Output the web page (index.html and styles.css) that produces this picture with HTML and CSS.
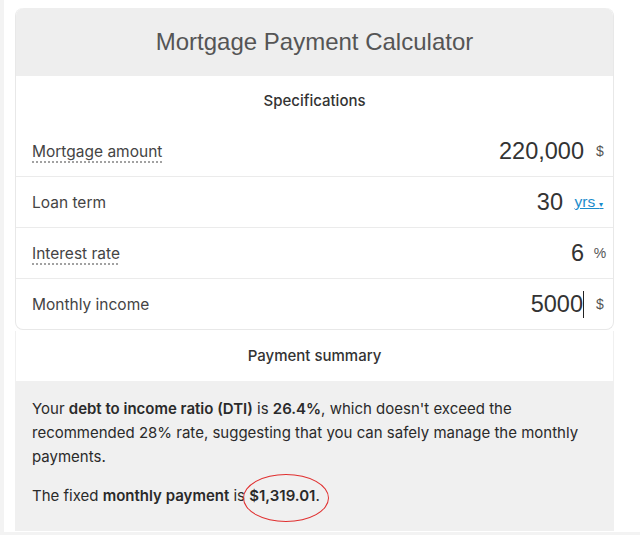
FILE: index.html
```html
<!DOCTYPE html>
<html lang="en">
<head>
    <meta charset="UTF-8">
    <meta name="viewport" content="width=device-width, initial-scale=1.0">
    <title>Mortgage Payment Calculator</title>
    <link rel="stylesheet" href="styles.css">
</head>
<body>
    <div class="page">
        <!-- Specifications card -->
        <div class="card">
            <h1 class="card-title">Mortgage Payment Calculator</h1>
            <div class="card-body">
                <div class="section-title">Specifications</div>
                <div class="row">
                    <span class="label hint">Mortgage amount</span>
                    <span class="value">220,000</span>
                    <span class="unit">$</span>
                </div>
                <div class="row">
                    <span class="label">Loan term</span>
                    <span class="value">30</span>
                    <a class="unit unit-link" href="#">yrs <small>&#9662;</small></a>
                </div>
                <div class="row">
                    <span class="label hint">Interest rate</span>
                    <span class="value">6</span>
                    <span class="unit">%</span>
                </div>
                <div class="row">
                    <span class="label">Monthly income</span>
                    <span class="value caret">5000</span>
                    <span class="unit">$</span>
                </div>
            </div>
        </div>

        <!-- Payment summary -->
        <div class="summary">
            <div class="section-title">Payment summary</div>
            <div class="summary-body">
                <p>Your <b>debt to income ratio (DTI)</b> is <b>26.4%</b>, which doesn't exceed the recommended 28% rate, suggesting that you can safely manage the monthly payments.</p>
                <p>The fixed <b>monthly payment</b> is <b class="circled">$1,319.01</b>.</p>
            </div>
        </div>
    </div>
</body>
</html>
```

FILE: styles.css
```css
html, body {
    margin: 0;
    height: 100%;
}
body {
    font-family: Inter, "Noto Sans", sans-serif;
    background-color: #fff;
    color: #333;
    border-left: 4px solid #f3f3f3;
    border-bottom: 3px solid #f3f3f3;
    box-sizing: border-box;
}
.page {
    padding: 8px 26px 0 11px;
}
.card {
    border: 1px solid #e8e8e8;
    border-top: none;
    border-radius: 8px;
}
.card-title {
    margin: 0;
    height: 68px;
    line-height: 68px;
    text-align: center;
    background-color: #eee;
    border-radius: 8px 8px 0 0;
    font-family: "Liberation Sans", Arial, sans-serif;
    font-size: 24px;
    font-weight: normal;
    color: #555;
}
.section-title {
    height: 50px;
    line-height: 50px;
    text-align: center;
    font-size: 15px;
    font-weight: 500;
    color: #333;
}
.row {
    display: flex;
    align-items: center;
    height: 50px;
    padding: 0 6px 0 16px;
    border-top: 1px solid #ebebeb;
}
.row:nth-child(2) {
    border-top: none;
}
.label {
    flex: 1;
    font-size: 15.5px;
    color: #444;
}
.hint {
    flex: none;
    margin-right: auto;
    text-decoration: underline dotted #888;
    text-underline-offset: 5px;
}
.value {
    font-family: "Liberation Sans", Arial, sans-serif;
    font-size: 23.5px;
    color: #333;
}
.caret {
    border-right: 1px solid #222;
}
.unit {
    width: 14px;
    margin-left: 9px;
    font-family: "Liberation Sans", Arial, sans-serif;
    font-size: 14px;
    color: #555;
    text-align: center;
}
.unit-link {
    width: 36px;
    margin-left: 8px;
    color: #1b8ccc;
    text-decoration: underline;
    font-size: 15.5px;
}
.unit-link small {
    font-size: 8px;
}
.summary {
    margin-top: 1px;
    border-left: 1px solid #f0f0f0;
    border-right: 1px solid #f0f0f0;
}
.summary-body {
    background-color: #f0f0f0;
    padding: 16px 16px 8px;
    font-size: 15px;
    line-height: 24px;
    color: #2a2a2a;
}
.summary-body p {
    margin: 0 0 15px;
}
.summary-body b {
    font-weight: 600;
}
.circled {
    position: relative;
}
.circled::after {
    content: "";
    position: absolute;
    left: -6px;
    top: -12px;
    width: 84px;
    height: 46px;
    border: 1px solid #e03030;
    border-radius: 50%;
}
```
